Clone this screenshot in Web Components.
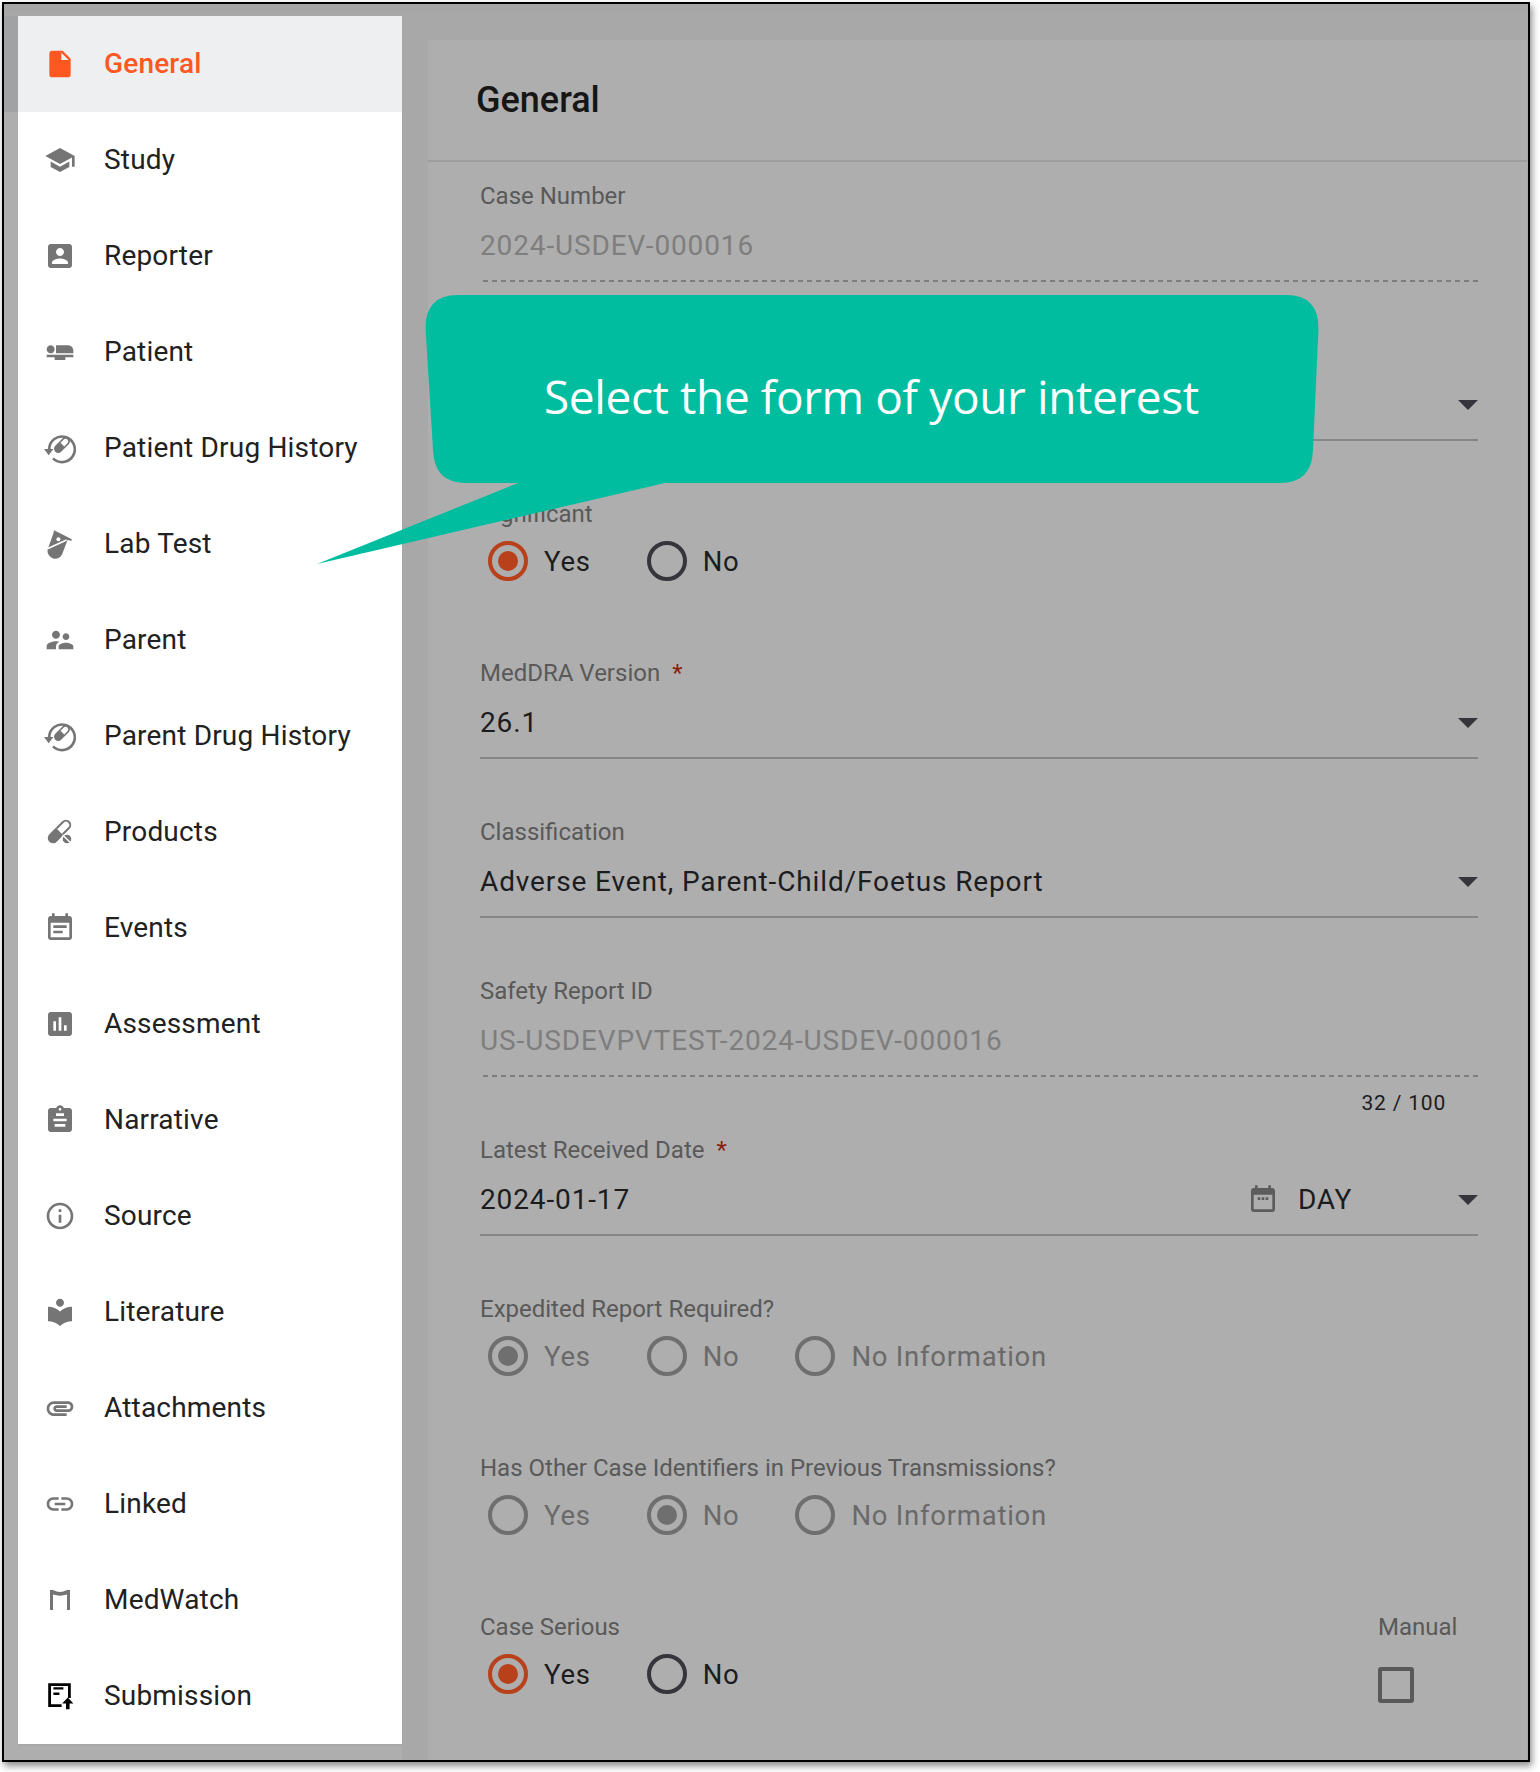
<!DOCTYPE html>
<html>
<head>
<meta charset="utf-8">
<title>General</title>
<style>
  html, body { margin: 0; background: #fff; }
  body { font-family: Roboto, "Liberation Sans", sans-serif; width: 1540px; height: 1772px; overflow: hidden; }
</style>
</head>
<body>
<app-frame>
  <side-nav slot="nav">
    <nav-item icon="file" active>General</nav-item>
    <nav-item icon="school">Study</nav-item>
    <nav-item icon="account">Reporter</nav-item>
    <nav-item icon="seat">Patient</nav-item>
    <nav-item icon="drughistory">Patient Drug History</nav-item>
    <nav-item icon="tube">Lab Test</nav-item>
    <nav-item icon="people">Parent</nav-item>
    <nav-item icon="drughistory">Parent Drug History</nav-item>
    <nav-item icon="pill">Products</nav-item>
    <nav-item icon="event">Events</nav-item>
    <nav-item icon="chart">Assessment</nav-item>
    <nav-item icon="clipboard">Narrative</nav-item>
    <nav-item icon="info">Source</nav-item>
    <nav-item icon="library">Literature</nav-item>
    <nav-item icon="attach">Attachments</nav-item>
    <nav-item icon="link">Linked</nav-item>
    <nav-item icon="medwatch">MedWatch</nav-item>
    <nav-item icon="submit">Submission</nav-item>
  </side-nav>
  <form-card slot="main" heading="General">
    <form-row label="Case Number"><text-control readonly>2024-USDEV-000016</text-control></form-row>
    <form-row><text-control select></text-control></form-row>
    <form-row label="Significant"><radio-group options="Yes,No" checked="Yes" tone="active"></radio-group></form-row>
    <form-row label="MedDRA Version" required><text-control select>26.1</text-control></form-row>
    <form-row label="Classification"><text-control select>Adverse Event, Parent-Child/Foetus Report</text-control></form-row>
    <form-row label="Safety Report ID"><text-control readonly hint="32 / 100">US-USDEVPVTEST-2024-USDEV-000016</text-control></form-row>
    <form-row label="Latest Received Date" required><text-control select calendar="DAY">2024-01-17</text-control></form-row>
    <form-row label="Expedited Report Required?"><radio-group options="Yes,No,No Information" checked="Yes"></radio-group></form-row>
    <form-row label="Has Other Case Identifiers in Previous Transmissions?"><radio-group options="Yes,No,No Information" checked="No"></radio-group></form-row>
    <form-row label="Case Serious">
      <radio-group options="Yes,No" checked="Yes" tone="active"></radio-group>
      <manual-check slot="side">Manual</manual-check>
    </form-row>
  </form-card>
  <call-out slot="over">Select the form of your interest</call-out>
</app-frame>

<script>
// material icons on a 24 box, the custom ones are drawn on a 32 box
const ICONS = {
  file: '<path d="M6 2c-1.1 0-1.99.9-1.99 2L4 20c0 1.1.89 2 1.99 2H18c1.1 0 2-.9 2-2V8l-6-6H6zm7 7V3.5L18.5 9H13z"/>',
  school: '<path d="M5 13.18v4L12 21l7-3.82v-4L12 17l-7-3.82zM12 3L1 9l11 6 9-4.91V17h2V9L12 3z"/>',
  account: '<path d="M3 5v14c0 1.1.89 2 2 2h14c1.1 0 2-.9 2-2V5c0-1.1-.9-2-2-2H5c-1.11 0-2 .9-2 2zm12 4c0 1.66-1.34 3-3 3s-3-1.34-3-3 1.34-3 3-3 3 1.34 3 3zm-9 8c0-2 4-3.1 6-3.1s6 1.1 6 3.1v1H6v-1z"/>',
  seat: '<path d="M22 11v2H9V7h9c2.21 0 4 1.79 4 4zM2 14v2h6v2h8v-2h6v-2H2zm5.14-1.9c1.16-1.19 1.14-3.08-.04-4.24-1.19-1.16-3.08-1.14-4.24.04-1.16 1.19-1.14 3.08.04 4.24 1.19 1.16 3.08 1.14 4.24-.04z"/>',
  people: '<path d="M16.5 12c1.38 0 2.49-1.12 2.49-2.5S17.88 7 16.5 7C15.12 7 14 8.12 14 9.5s1.12 2.5 2.5 2.5zM9 11c1.66 0 2.99-1.34 2.99-3S10.66 5 9 5C7.34 5 6 6.34 6 8s1.34 3 3 3zm7.5 3c-1.83 0-5.5.92-5.5 2.75V19h11v-2.25c0-1.83-3.67-2.75-5.5-2.75zM9 13c-2.33 0-7 1.17-7 3.5V19h7v-2.25c0-.85.33-2.34 2.37-3.47C10.5 13.1 9.66 13 9 13z"/>',
  event: '<path d="M17 10H7v2h10v-2zm2-7h-1V1h-2v2H8V1H6v2H5c-1.11 0-1.99.9-1.99 2L3 19c0 1.1.89 2 2 2h14c1.1 0 2-.9 2-2V5c0-1.1-.9-2-2-2zm0 16H5V8h14v11zm-5-5H7v2h7v-2z"/>',
  chart: '<path d="M19 3H5c-1.1 0-2 .9-2 2v14c0 1.1.9 2 2 2h14c1.1 0 2-.9 2-2V5c0-1.1-.9-2-2-2zM9 17H7v-7h2v7zm4 0h-2V7h2v10zm4 0h-2v-4h2v4z"/>',
  clipboard: '<path d="M19 3h-4.18C14.4 1.84 13.3 1 12 1c-1.3 0-2.4.84-2.82 2H5c-1.1 0-2 .9-2 2v14c0 1.1.9 2 2 2h14c1.1 0 2-.9 2-2V5c0-1.1-.9-2-2-2zm-7 0c.55 0 1 .45 1 1s-.45 1-1 1-1-.45-1-1 .45-1 1-1zM16 17H8v-2h8v2zM17 13H7v-2h10v2zM15 9H9V7h6v2z"/>',
  info: '<path d="M11 17h2v-6h-2v6zm1-15C6.48 2 2 6.48 2 12s4.48 10 10 10 10-4.48 10-10S17.52 2 12 2zm0 18c-4.41 0-8-3.59-8-8s3.59-8 8-8 8 3.59 8 8-3.59 8-8 8zM11 9h2V7h-2v2z"/>',
  library: '<path d="M12 11.55C9.64 9.35 6.48 8 3 8v11c3.48 0 6.64 1.35 9 3.55 2.36-2.19 5.52-3.55 9-3.55V8c-3.48 0-6.64 1.35-9 3.55zM12 8c1.66 0 3-1.34 3-3s-1.34-3-3-3-3 1.34-3 3 1.34 3 3 3z"/>',
  attach: '<path d="M2 12.5C2 9.46 4.46 7 7.5 7H18c2.21 0 4 1.79 4 4s-1.79 4-4 4H9.5C8.12 15 7 13.88 7 12.5S8.12 10 9.5 10H17v2H9.41c-.55 0-.55 1 0 1H18c1.1 0 2-.9 2-2s-.9-2-2-2H7.5C5.57 9 4 10.57 4 12.5S5.57 16 7.5 16H17v2H7.5C4.46 18 2 15.54 2 12.5z"/>',
  link: '<path d="M3.9 12c0-1.71 1.39-3.1 3.1-3.1h4V7H7c-2.76 0-5 2.24-5 5s2.24 5 5 5h4v-1.9H7c-1.71 0-3.1-1.39-3.1-3.1zM8 13h8v-2H8v2zm9-6h-4v1.9h4c1.71 0 3.1 1.39 3.1 3.1s-1.39 3.1-3.1 3.1h-4V17h4c2.76 0 5-2.24 5-5s-2.24-5-5-5z"/>',
  today: '<path d="M19 3h-1V1h-2v2H8V1H6v2H5c-1.11 0-1.99.9-1.99 2L3 19c0 1.1.89 2 2 2h14c1.1 0 2-.9 2-2V5c0-1.1-.9-2-2-2zm0 16H5V8h14v11z"/><path d="M8 10h2v2H8zM11 10h2v2h-2zM14 10h2v2h-2z"/>'
};
const ICONS32 = {
  drughistory: '<path d="M5.2 17A12.8 12.8 0 1 1 9 26.4" fill="none" stroke="currentColor" stroke-width="2.6"/><path d="M0 17h9.4l-4.7 6.2z"/><g transform="rotate(-45 18 13)"><rect x="8.5" y="8.8" width="19" height="8.4" rx="4.2"/><path d="M18.5 10.4h4.6a2.6 2.6 0 0 1 0 5.2h-4.6z" fill="#fff"/></g>',
  tube: '<path d="M10 2.2L27.9 11.2l-.8 1.7-3.4-1.2L18.6 25A7.6 7.6 0 0 1 3.8 21L9 6.4z"/><path d="M3.4 20.8L22.6 12" stroke="#fff" stroke-width="1.7" fill="none"/><circle cx="14.4" cy="11.2" r="2" fill="#fff"/>',
  pill: '<g transform="rotate(-45 15.5 15.5)"><path d="M15.5 10.25H6.35a5.25 5.25 0 0 0 0 10.5h9.15z"/><path d="M15.5 11.25h9.15a4.25 4.25 0 0 1 0 8.5H15.5" fill="none" stroke="currentColor" stroke-width="2"/></g><circle cx="23" cy="23" r="5" stroke="#fff" stroke-width="1.4"/><path d="M19.2 19.6l7.4 7.2" stroke="#fff" stroke-width="1.4"/>',
  medwatch: '<path d="M6 6H9Q16 10 23 6H26V26H23V10.6Q16 12.8 9 10.6V26H6Z"/>',
  submit: '<path d="M25.4 18V4.6H5.6V25.6H17.6" fill="none" stroke="#000" stroke-width="2.8"/><path d="M9.4 8.4h10M9.4 13.8h6" stroke="#000" stroke-width="2.4"/><path d="M23.8 17.6l5.6 6h-3.8v5.6h-3.6v-5.6h-3.8z" fill="#000"/>'
};
function iconSvg(name, size) {
  if (ICONS32[name]) return `<svg width="${size}" height="${size}" viewBox="0 0 32 32" fill="currentColor">${ICONS32[name]}</svg>`;
  return `<svg width="${size}" height="${size}" viewBox="0 0 24 24" fill="currentColor">${ICONS[name]}</svg>`;
}

class AppFrame extends HTMLElement {
  connectedCallback() {
    this.attachShadow({ mode: 'open' });
    this.shadowRoot.innerHTML = `
      <style>
        :host { display: flex; position: relative; box-sizing: border-box; width: 1528px; height: 1760px; margin: 2px;
          border: 2px solid #000; box-shadow: 2px 4px 7px rgba(0,0,0,.45); padding: 12px 0 0 14px;
          background:
            linear-gradient(#a1a2a4, #a1a2a4) 0 12px / 14px 96px no-repeat,
            linear-gradient(#a6a6a6, #a8a8a8) 0 0 / 100% 12px no-repeat,
            linear-gradient(#aeaeae, #aeaeae) 0 0 / 14px 100% no-repeat,
            linear-gradient(#aeaeae, #aeaeae) 0 100% / 398px 14px no-repeat,
            #a8a8a8; }
      </style>
      <slot name="nav"></slot>
      <slot name="main"></slot>
      <slot name="over"></slot>`;
  }
}

class SideNav extends HTMLElement {
  connectedCallback() {
    this.attachShadow({ mode: 'open' });
    this.shadowRoot.innerHTML = `
      <style>:host { display: flex; flex-direction: column; flex: none; width: 384px; height: 1728px; background: #fff; }</style>
      <slot></slot>`;
  }
}

class NavItem extends HTMLElement {
  connectedCallback() {
    const active = this.hasAttribute('active');
    this.attachShadow({ mode: 'open' });
    this.shadowRoot.innerHTML = `
      <style>
        :host { display: flex; align-items: center; height: 96px; flex: none; padding-left: 26px; gap: 28px;
          font-size: 28px; letter-spacing: .18px; color: #212121; }
        :host([active]) { background: #eeeff1; color: #ff5722; font-weight: 500; }
        .ic { display: flex; width: 32px; height: 32px; color: ${active ? '#ff5722' : '#757575'}; }
        .t { margin-bottom: 2px; }
      </style>
      <span class="ic">${iconSvg(this.getAttribute('icon'), 32)}</span><span class="t"><slot></slot></span>`;
  }
}

class FormCard extends HTMLElement {
  connectedCallback() {
    this.attachShadow({ mode: 'open' });
    this.shadowRoot.innerHTML = `
      <style>
        :host { display: block; flex: none; width: 1099px; height: 1720px; margin: 24px 0 0 26px; background: #aeaeae; }
        h2 { margin: 0; height: 120px; line-height: 121px; padding-left: 48px; font-size: 36px; font-weight: 500; color: #161616;
          border-bottom: 2px solid #9d9d9d; }
        .body { padding: 19.7px 49px 0 52px; }
      </style>
      <h2>${this.getAttribute('heading')}</h2>
      <div class="body"><slot></slot></div>`;
  }
}

class FormRow extends HTMLElement {
  connectedCallback() {
    const label = this.getAttribute('label') || '';
    const req = this.hasAttribute('required') ? '<b>*</b>' : '';
    this.attachShadow({ mode: 'open' });
    this.shadowRoot.innerHTML = `
      <style>
        :host { display: flex; height: 159px; }
        .main { flex: 1; min-width: 0; }
        label { display: block; height: 28px; line-height: 28px; font-size: 24px; color: #595959; white-space: nowrap; }
        b { font-weight: 400; color: #8c1f0c; margin-left: 12px; }
        ::slotted([slot=side]) { margin-right: 36px; }
      </style>
      <div class="main"><label>${label}${req}</label><slot></slot></div>
      <slot name="side"></slot>`;
  }
}

class TextControl extends HTMLElement {
  connectedCallback() {
    const ro = this.hasAttribute('readonly');
    const hint = this.getAttribute('hint');
    const cal = this.getAttribute('calendar');
    this.attachShadow({ mode: 'open' });
    this.shadowRoot.innerHTML = `
      <style>
        :host { display: block; position: relative; }
        .box { display: flex; align-items: center; height: 36px; margin-top: 18px; padding-bottom: 16px; font-size: 28px;
          letter-spacing: .87px; color: ${ro ? '#7e7e7e' : '#1c1c1f'}; border-bottom: 2px solid #868686; line-height: 36px; }
        :host([readonly]) .box { border-bottom: 0; padding-bottom: 18px;
          background: repeating-linear-gradient(270deg, #7d7d7d 0 5px, transparent 5px 9px) left bottom / 100% 2px no-repeat; }
        .val { flex: 1; white-space: nowrap; }
        .cal { display: flex; color: #5c5c5c; margin-right: 19px; }
        .day { width: 160px; letter-spacing: .75px; }
        .arrow { width: 0; height: 0; border: solid transparent; border-width: 10px 10px 0; border-top-color: #35353b; margin-top: 1px; }
        .hint { height: 28px; margin: 12px 32px 0 0; text-align: right; font-size: 21px; line-height: 28px; letter-spacing: .8px; color: #1c1c1f; }
      </style>
      <div class="box">
        <span class="val"><slot></slot></span>
        ${cal ? `<span class="cal">${iconSvg('today', 32)}</span><span class="day">${cal}</span>` : ''}
        ${this.hasAttribute('select') ? '<span class="arrow"></span>' : ''}
      </div>
      ${hint ? `<div class="hint">${hint}</div>` : ''}`;
  }
}

class RadioGroup extends HTMLElement {
  connectedCallback() {
    const active = this.getAttribute('tone') === 'active';
    const checked = this.getAttribute('checked');
    const items = this.getAttribute('options').split(',').map(o => `
      <span class="opt ${o === checked ? 'on' : ''}"><i></i>${o}</span>`).join('');
    this.attachShadow({ mode: 'open' });
    this.shadowRoot.innerHTML = `
      <style>
        :host { display: flex; gap: 56px; margin: 13.6px 0 0 8px; font-size: 27.5px; letter-spacing: .75px; color: ${active ? '#1c1c1f' : '#6a6a6a'}; }
        .opt { display: flex; align-items: center; gap: 16px; height: 40px; }
        i { display: block; box-sizing: border-box; width: 40px; height: 40px; border-radius: 50%; border: 4px solid ${active ? '#35353b' : '#6f6f6f'}; position: relative; }
        .on i { border-color: ${active ? '#b8401a' : '#6f6f6f'}; }
        .on i::after { content: ""; position: absolute; inset: 6px; border-radius: 50%; background: ${active ? '#b8401a' : '#6f6f6f'}; }
      </style>${items}`;
  }
}

class ManualCheck extends HTMLElement {
  connectedCallback() {
    this.attachShadow({ mode: 'open' });
    this.shadowRoot.innerHTML = `
      <style>
        :host { display: block; width: 64px; font-size: 24px; line-height: 28px; color: #595959; }
        i { display: block; box-sizing: border-box; width: 36px; height: 36px; margin-top: 26px; border: 4px solid #595959; border-radius: 3px; }
      </style><slot></slot><i></i>`;
  }
}

class CallOut extends HTMLElement {
  connectedCallback() {
    this.attachShadow({ mode: 'open' });
    this.shadowRoot.innerHTML = `
      <style>
        :host { position: absolute; left: 310px; top: 291px; width: 1010px; height: 270px; }
        svg { position: absolute; inset: 0; }
        .txt { position: absolute; left: 230px; top: 67px; line-height: 68px; white-space: nowrap; color: #fff;
          font-family: "Open Sans", "Noto Sans", sans-serif; font-size: 46px; letter-spacing: -.4px; }
      </style>
      <svg width="1010" height="270" viewBox="314 295 1010 270">
        <path fill="#00bda0" d="M458 295H1286Q1318.5 295 1318.5 328L1313 450Q1312 483 1280 483H665L317 564 518 483H466Q434 483 433 450L425.5 328Q425.5 295 458 295Z"/>
      </svg>
      <div class="txt"><slot></slot></div>`;
  }
}

customElements.define('app-frame', AppFrame);
customElements.define('side-nav', SideNav);
customElements.define('nav-item', NavItem);
customElements.define('form-card', FormCard);
customElements.define('form-row', FormRow);
customElements.define('text-control', TextControl);
customElements.define('radio-group', RadioGroup);
customElements.define('manual-check', ManualCheck);
customElements.define('call-out', CallOut);
</script>
</body>
</html>
